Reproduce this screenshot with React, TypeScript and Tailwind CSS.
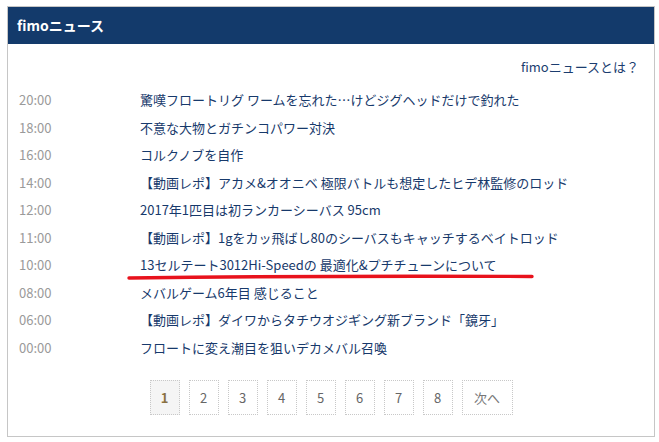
const news = [
  { time: "20:00", title: "驚嘆フロートリグ ワームを忘れた…けどジグヘッドだけで釣れた" },
  { time: "18:00", title: "不意な大物とガチンコパワー対決" },
  { time: "16:00", title: "コルクノブを自作" },
  { time: "14:00", title: "【動画レポ】アカメ&オオニベ 極限バトルも想定したヒデ林監修のロッド" },
  { time: "12:00", title: "2017年1匹目は初ランカーシーバス 95cm" },
  { time: "11:00", title: "【動画レポ】1gをカッ飛ばし80のシーバスもキャッチするベイトロッド" },
  { time: "10:00", title: "13セルテート3012Hi-Speedの 最適化&プチチューンについて" },
  { time: "08:00", title: "メバルゲーム6年目 感じること" },
  { time: "06:00", title: "【動画レポ】ダイワからタチウオジギング新ブランド「鏡牙」" },
  { time: "00:00", title: "フロートに変え潮目を狙いデカメバル召喚" },
];

const pages = ["1", "2", "3", "4", "5", "6", "7", "8"];

export default function App() {
  return (
    <div className="w-[659px] h-[442px] bg-white pt-[6px] pl-[7px] font-['Noto_Sans_CJK_JP',sans-serif]">
      <div className="relative w-[648px] h-[431px] border border-[#c6c6c6] bg-white">
        {/* header */}
        <div className="h-[37px] bg-[#133a6b] flex items-center px-[9px]">
          <h2 className="text-white text-[14px] font-bold">fimoニュース</h2>
        </div>

        <div className="flex justify-end pr-[15px] pt-[13px] h-[42px]">
          <a className="text-[13px] text-[#1b3d6f] leading-[20px]">fimoニュースとは？</a>
        </div>

        {/* news list */}
        <ul>
          {news.map((n) => (
            <li key={n.time} className="flex items-center h-[27.5px] text-[13px]">
              <span className="w-[132px] pl-[11px] text-[#9a9a9a]">{n.time}</span>
              <a className="text-[#17396b]">{n.title}</a>
            </li>
          ))}
        </ul>

        {/* pager */}
        <div className="flex justify-center gap-[9px] mt-[19px]">
          {pages.map((p) => (
            <span
              key={p}
              className={
                p === "1"
                  ? "w-[30px] h-[35px] flex items-center justify-center border border-dotted border-[#c8c8c8] bg-[#f5f5f5] text-[#8a7242] font-bold text-[13px]"
                  : "w-[30px] h-[35px] flex items-center justify-center border border-dotted border-[#c8c8c8] text-[#666] text-[13px]"
              }
            >
              {p}
            </span>
          ))}
          <span className="w-[51px] h-[35px] flex items-center justify-center border border-dotted border-[#c8c8c8] text-[#777] text-[13px]">
            次へ
          </span>
        </div>

        {/* red marker stroke */}
        <svg
          className="absolute left-[119px] top-[265px]"
          width="408"
          height="10"
          viewBox="0 0 408 10"
        >
          <path d="M2 6 Q 200 3.5 405 4.5" stroke="#e8121c" strokeWidth="3.4" strokeLinecap="round" fill="none" />
        </svg>
      </div>
    </div>
  );
}
